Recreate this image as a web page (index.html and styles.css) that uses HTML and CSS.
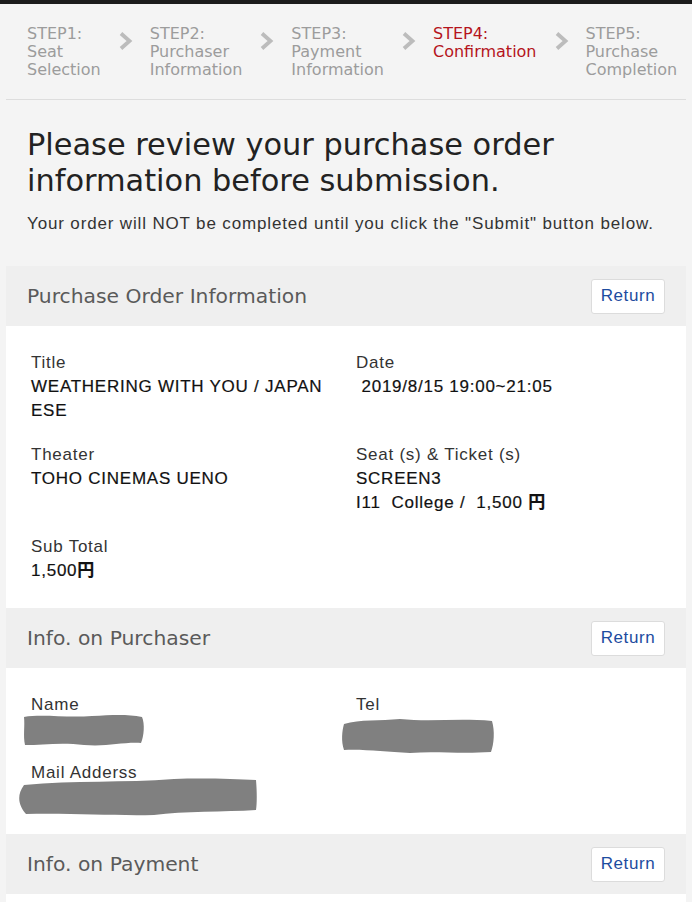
FILE: index.html
```html
<!DOCTYPE html>
<html lang="en">
<head>
<meta charset="utf-8">
<title>Confirmation</title>
<link rel="stylesheet" href="styles.css">
</head>
<body>
<div class="topbar"></div>
<div class="page">
  <nav class="steps">
    <div class="step">STEP1:<br>Seat<br>Selection</div>
    <svg class="chev" width="15" height="20" viewBox="0 0 15 20"><polyline points="3,2.5 11.5,10 3,17.5" fill="none" stroke="#bcbcbc" stroke-width="3.8"/></svg>
    <div class="step">STEP2:<br>Purchaser<br>Information</div>
    <svg class="chev" width="15" height="20" viewBox="0 0 15 20"><polyline points="3,2.5 11.5,10 3,17.5" fill="none" stroke="#bcbcbc" stroke-width="3.8"/></svg>
    <div class="step">STEP3:<br>Payment<br>Information</div>
    <svg class="chev" width="15" height="20" viewBox="0 0 15 20"><polyline points="3,2.5 11.5,10 3,17.5" fill="none" stroke="#bcbcbc" stroke-width="3.8"/></svg>
    <div class="step active">STEP4:<br>Confirmation</div>
    <svg class="chev" width="15" height="20" viewBox="0 0 15 20"><polyline points="3,2.5 11.5,10 3,17.5" fill="none" stroke="#bcbcbc" stroke-width="3.8"/></svg>
    <div class="step">STEP5:<br>Purchase<br>Completion</div>
  </nav>

  <div class="intro">
    <h1 class="title">Please review your purchase order information before submission.</h1>
    <p class="lead">Your order will NOT be completed until you click the "Submit" button below.</p>
  </div>

  <section class="panel">
    <div class="panel-head">
      <h2 class="panel-title">Purchase Order Information</h2>
      <a class="btn">Return</a>
    </div>
    <div class="panel-body grid">
      <div class="field left">
        <div class="label">Title</div>
        <div class="value wrap">WEATHERING WITH YOU / JAPANESE</div>
      </div>
      <div class="field">
        <div class="label">Date</div>
        <div class="value">&nbsp;2019/8/15 19:00~21:05</div>
      </div>
      <div class="field left">
        <div class="label">Theater</div>
        <div class="value">TOHO CINEMAS UENO</div>
      </div>
      <div class="field">
        <div class="label">Seat (s) &amp; Ticket (s)</div>
        <div class="value">SCREEN3</div>
        <div class="value">I11&nbsp; College /&nbsp; 1,500 <b class="yen">円</b></div>
      </div>
      <div class="field left">
        <div class="label">Sub Total</div>
        <div class="value">1,500<b class="yen">円</b></div>
      </div>
    </div>
  </section>

  <section class="panel">
    <div class="panel-head">
      <h2 class="panel-title">Info. on Purchaser</h2>
      <a class="btn">Return</a>
    </div>
    <div class="panel-body grid">
      <div class="field left">
        <div class="label">Name</div>
        <div class="value">&nbsp;</div>
        <svg class="redact r-name" width="124" height="36" viewBox="0 0 124 36"><path d="M2,5 C20,2 45,6 70,4 C90,3 105,2 120,5 C123,12 122,24 119,31 C100,30 85,35 62,33 C40,30 20,33 3,33 C1,24 3,14 2,5 Z" fill="#808080"/></svg>
      </div>
      <div class="field">
        <div class="label">Tel</div>
        <div class="value">&nbsp;</div>
        <svg class="redact r-tel" width="156" height="40" viewBox="0 0 156 40"><path d="M4,8 C20,3 40,5 60,3 C90,6 120,2 152,5 C155,15 154,28 151,36 C120,38 95,35 70,37 C45,36 25,33 4,34 C1,25 2,15 4,8 Z" fill="#808080"/></svg>
      </div>
      <div class="field left">
        <div class="label">Mail Adderss</div>
        <div class="value">&nbsp;</div>
        <svg class="redact r-mail" width="244" height="42" viewBox="0 0 244 42"><path d="M10,9 C60,4 110,7 160,3 C190,2 220,3 242,4 C243,16 243,27 242,34 C210,36 170,35 140,39 C100,40 60,37 12,38 C5,30 2,20 10,9 Z" fill="#808080"/></svg>
      </div>
    </div>
  </section>

  <section class="panel">
    <div class="panel-head">
      <h2 class="panel-title">Info. on Payment</h2>
      <a class="btn">Return</a>
    </div>
    <div class="panel-body tail"></div>
  </section>
</div>
</body>
</html>
```

FILE: styles.css
```css
* { box-sizing: border-box; }
html, body { margin: 0; padding: 0; }
body {
  background: #f4f4f4;
  font-family: "Liberation Sans", Arial, sans-serif;
  color: #222;
}
.topbar { height: 4px; background: #1c1c1c; }
.page { margin: 0 6px; }

.steps {
  display: flex;
  align-items: flex-start;
  gap: 17px;
  padding: 21px 0 20px 21px;
  border-bottom: 1px solid #dddddd;
}
.step {
  font-family: "DejaVu Sans", Verdana, sans-serif;
  font-size: 16px;
  line-height: 18px;
  color: #9c9c9c;
  white-space: nowrap;
}
.step.active { color: #b5141c; }
.chev { flex: none; margin-top: 6px; }

.intro { padding: 27px 0 0 21px; }
.title {
  margin: 0;
  font-family: "DejaVu Sans", Verdana, sans-serif;
  font-weight: normal;
  font-size: 30.4px;
  line-height: 36px;
  color: #222;
  max-width: 600px;
}
.lead {
  margin: 13px 0 30px;
  font-size: 17px;
  letter-spacing: 0.85px;
  line-height: 24px;
  color: #333;
}

.panel { background: #fff; }
.panel-head {
  height: 60px;
  background: #efefef;
  display: flex;
  align-items: center;
  justify-content: space-between;
  padding: 0 21px;
}
.panel-title {
  margin: 0;
  font-family: "DejaVu Sans", Verdana, sans-serif;
  font-weight: normal;
  font-size: 20.3px;
  color: #5a5a5a;
}
.btn {
  display: flex;
  align-items: center;
  justify-content: center;
  width: 74px;
  height: 35px;
  background: #fff;
  border: 1px solid #dcdcdc;
  border-radius: 3px;
  color: #1d4c9f;
  font-size: 17px;
  letter-spacing: 0.6px;
}

.panel-body { padding: 25px; }
.grid {
  display: grid;
  grid-template-columns: 325px 1fr;
  row-gap: 20px;
}
.field { position: relative; }
.field.left { grid-column: 1; padding-right: 28px; }
.label, .value {
  font-size: 17px;
  line-height: 24px;
  letter-spacing: 0.75px;
  height: 24px;
}
.value.wrap { height: auto; }
.label { color: #333; }
.value { color: #111; -webkit-text-stroke: 0.2px #111; }
.value.wrap { word-break: break-all; }
.yen {
  font-family: "Noto Sans CJK JP", sans-serif;
  font-weight: bold;
  letter-spacing: 0;
  line-height: 0;
}
.redact { position: absolute; }
.r-name { left: -9px; top: 19px; }
.r-tel { left: -16px; top: 23px; }
.r-mail { left: -17px; top: 15px; }
.tail { height: 20px; padding: 0; }
```
